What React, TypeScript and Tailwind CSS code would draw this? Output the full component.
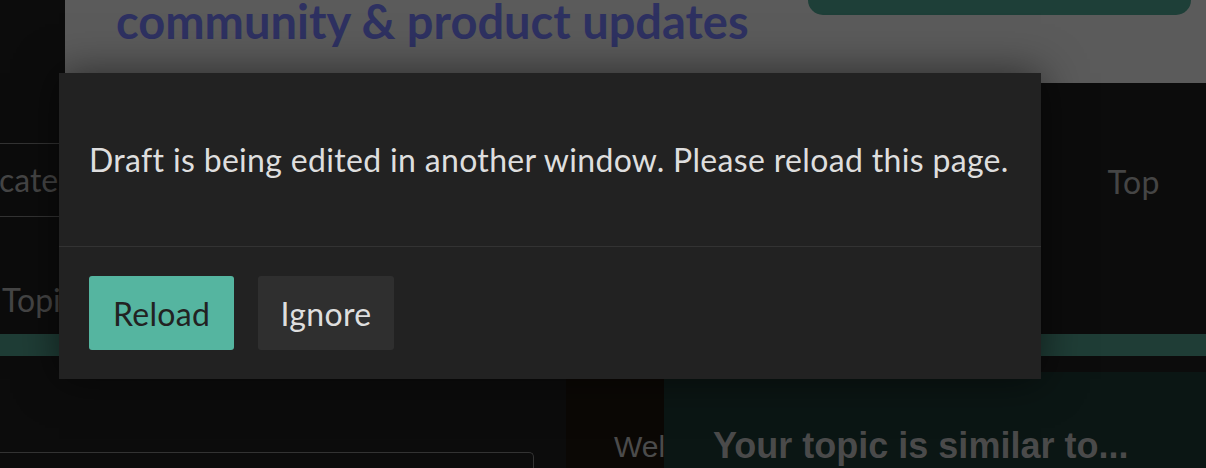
import React from "react";

const sans = "font-['Lato','Noto_Sans',sans-serif]";
const arial = "font-['Liberation_Sans','Arial',sans-serif]";

export default function App() {
  return (
    <main className={`relative w-[1206px] h-[468px] overflow-hidden bg-[#0c0c0c] ${sans}`}>
      {/* Page behind the modal (already dimmed) */}
      <div className="flex flex-col">
        {/* Banner */}
        <div className="flex h-[83px]">
          <div className="w-[65px] bg-[#0c0c0c]" />
          <div className="flex flex-1 items-start justify-between bg-[#5b5b5b] pr-[15px]">
            <h2 className="pl-[51px] -mt-[2px] text-[47px] font-bold leading-none text-[#2e3161] whitespace-nowrap">
              community &amp; product updates
            </h2>
            <div className="w-[383px] h-[15px] rounded-b-[15px] bg-[#1e3f38]" />
          </div>
        </div>

        {/* Composer header */}
        <div className="flex h-[251px]">
          <div className="w-[600px] pt-[60px]">
            <div className="flex h-[74px] w-[520px] items-center border-y border-[#333] text-[32px] text-[#454545] overflow-hidden">
              <span className="-ml-[1px] whitespace-nowrap">category</span>
            </div>
            <div className="mt-[59px] pl-[2px] text-[32px] text-[#454545]">Topic</div>
          </div>
          <div className="flex-1 flex justify-end pr-[46px] pt-[75px]">
            <span className="text-[32px] tracking-[0.5px] text-[#454545]">Top</span>
          </div>
        </div>

        {/* Green bar */}
        <div className="h-[22px] bg-[#1f3d36]" />

        {/* Lower area */}
        <div className="flex h-[112px]">
          <div className="w-[566px] pt-[96px]">
            <div className="h-[30px] w-[534px] rounded-tr-[5px] border-t border-r border-[#333]" />
          </div>
          <div className={`w-[98px] overflow-hidden bg-[#0b0805] pl-[48px] pt-[68px] text-[30px] text-[#4b4b4b] whitespace-nowrap ${arial}`}>
            Welcome
          </div>
          <div className="flex-1 pt-[16px]">
            <div className={`h-full bg-[#0b1614] px-[49px] pt-[47px] text-[36px] font-bold text-[#4a4a4a] whitespace-nowrap ${arial}`}>
              Your topic is similar to...
            </div>
          </div>
        </div>
      </div>

      {/* Modal */}
      <div className="absolute left-[59px] top-[73px] w-[982px] bg-[#222222] shadow-[0_0_40px_rgba(0,0,0,0.55)]">
        <div className="flex h-[173px] items-center px-[30px] text-[32px] tracking-[0.33px] text-[#dedede] whitespace-nowrap">
          Draft is being edited in another window. Please reload this page.
        </div>
        <div className="flex gap-[24px] border-t border-[#333] px-[30px] py-[29px]">
          <button className="flex h-[74px] w-[145px] items-center justify-center rounded-[3px] bg-[#55b5a0] pt-[2px] text-[32px] tracking-[0.3px] text-[#222]">
            Reload
          </button>
          <button className="flex h-[74px] w-[136px] items-center justify-center rounded-[3px] bg-[#2f2f2f] pt-[2px] text-[32px] tracking-[0.3px] text-[#dedede]">
            Ignore
          </button>
        </div>
      </div>
    </main>
  );
}
